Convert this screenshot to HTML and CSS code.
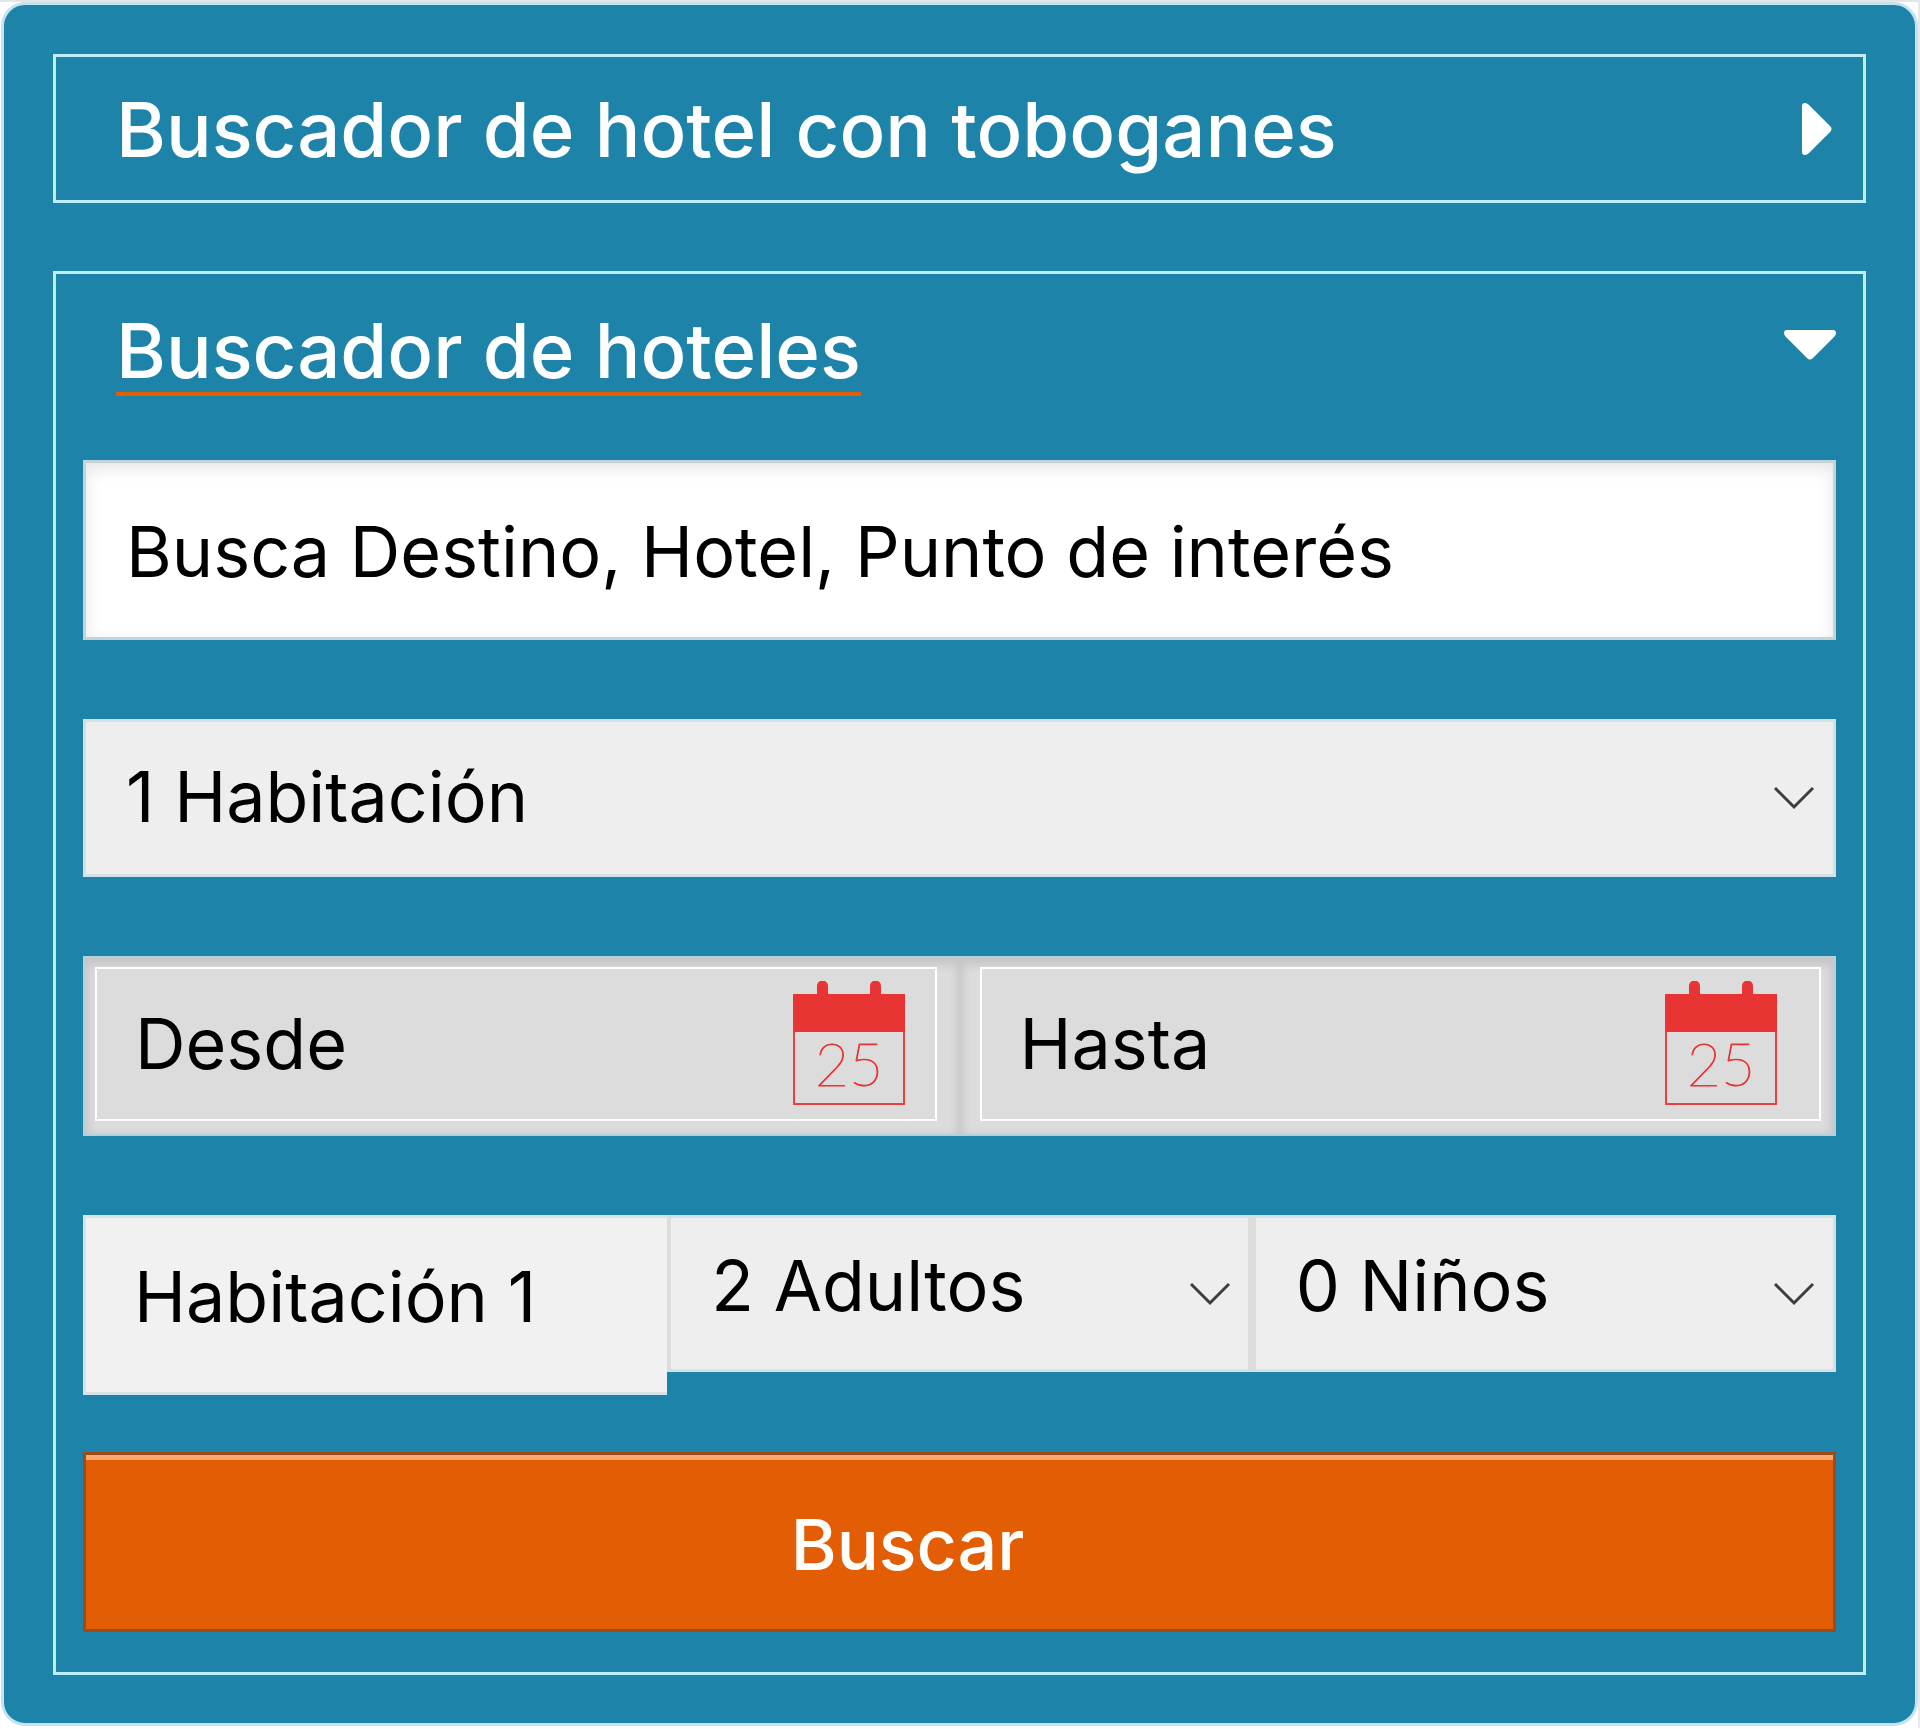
FILE: index.html
```html
<!DOCTYPE html>
<html lang="es">
<head>
<meta charset="utf-8">
<meta name="viewport" content="width=device-width, initial-scale=1">
<title>Buscador de hoteles</title>
<link rel="stylesheet" href="styles.css">
</head>
<body>
<main class="panel">
  <section class="box">
    <h2 class="heading">
      <button class="toggle" type="button" aria-expanded="false">
        <span class="toggle-text">Buscador de hotel con toboganes</span>
        <svg class="arrow arrow-right" viewBox="0 0 30 52" width="30" height="52" aria-hidden="true"><path d="M0 3Q0 0 3 0Q5 0 7 2L28 23Q31 26 28 29L7 50Q5 52 3 52Q0 52 0 49Z"/></svg>
      </button>
    </h2>
  </section>

  <section class="box">
    <h2 class="heading">
      <button class="toggle toggle-open" type="button" aria-expanded="true">
        <span class="toggle-text">Buscador de hoteles</span>
        <svg class="arrow" viewBox="0 0 52 30" width="52" height="30" aria-hidden="true"><path d="M3 0Q0 0 0 3Q0 5 2 7L23 28Q26 31 29 28L50 7Q52 5 52 3Q52 0 49 0Z"/></svg>
      </button>
    </h2>

    <form class="form">
      <input class="destination" type="text" aria-label="Destino" placeholder="Busca Destino, Hotel, Punto de interés">

      <div class="select rooms">
        <select class="select-field" aria-label="Habitaciones"><option>1 Habitación</option><option>2 Habitaciones</option></select>
        <svg class="chevron" viewBox="0 0 40 24" width="40" height="24" aria-hidden="true"><path d="M1 2L20 21L39 2"/></svg>
      </div>

      <div class="dates">
        <div class="date">
          <div class="date-frame">
            <input class="date-field" type="text" aria-label="Fecha desde" placeholder="Desde">
            <svg class="calendar" viewBox="0 0 112 124" width="112" height="124" aria-hidden="true"><path class="fill" d="M0 13H24V5a5 5 0 0 1 11 0V13H77V5a5 5 0 0 1 11 0V13H112V51H0Z"/><path class="line" d="M1 50V123H111V50"/><text x="56" y="105">25</text></svg>
          </div>
        </div>
        <div class="date">
          <div class="date-frame">
            <input class="date-field" type="text" aria-label="Fecha hasta" placeholder="Hasta">
            <svg class="calendar" viewBox="0 0 112 124" width="112" height="124" aria-hidden="true"><path class="fill" d="M0 13H24V5a5 5 0 0 1 11 0V13H77V5a5 5 0 0 1 11 0V13H112V51H0Z"/><path class="line" d="M1 50V123H111V50"/><text x="56" y="105">25</text></svg>
          </div>
        </div>
      </div>

      <div class="guests">
        <div class="room-name">Habitación 1</div>
        <div class="select">
          <select class="select-field guest-field" aria-label="Adultos"><option>2 Adultos</option><option>1 Adulto</option></select>
          <svg class="chevron" viewBox="0 0 40 24" width="40" height="24" aria-hidden="true"><path d="M1 2L20 21L39 2"/></svg>
        </div>
        <div class="select last">
          <select class="select-field guest-field" aria-label="Niños"><option>0 Niños</option><option>1 Niño</option></select>
          <svg class="chevron" viewBox="0 0 40 24" width="40" height="24" aria-hidden="true"><path d="M1 2L20 21L39 2"/></svg>
        </div>
      </div>

      <button class="submit" type="submit">Buscar</button>
    </form>
  </section>
</main>
</body>
</html>
```
FILE: styles.css
```css
* {
  box-sizing: border-box;
}

body {
  margin: 0;
  background: #fff;
  border-top: 2px solid #e2e6e6;
  border-right: 2px solid #e6e8ea;
  font-family: Inter, "Liberation Sans", sans-serif;
  font-size: 70px;
  color: #000;
}

input,
select,
button {
  margin: 0;
  font: inherit;
  color: inherit;
  border-radius: 0;
}

input::placeholder {
  color: #000;
  opacity: 1;
}

.panel {
  display: flex;
  flex-direction: column;
  gap: 68px;
  margin: 0 0 2px 1px;
  padding: 49px 49px 48px 49px;
  background: #1d83a8;
  border: 3px solid #c3e3ee;
  border-radius: 24px;
}

.box {
  border: 3px solid #bdeefb;
}

.heading {
  margin: 0;
  font-size: 76px;
  font-weight: 500;
}

.toggle {
  display: flex;
  align-items: center;
  justify-content: space-between;
  width: 100%;
  padding: 32px 27px 31px 60px;
  background: none;
  border: 0;
  color: #fff;
  line-height: 80px;
  text-align: left;
}

.toggle-open {
  align-items: flex-start;
  padding: 36px 27px 64px 60px;
}

.toggle-open .toggle-text {
  padding-bottom: 2px;
  border-bottom: 4px solid #e25d03;
}

.toggle-open .arrow {
  margin-top: 20px;
}

.arrow {
  fill: #fff;
}

.arrow-right {
  margin-right: 4px;
}

.form {
  display: flex;
  flex-direction: column;
  gap: 79px;
  padding: 0 27px 40px;
}

.destination {
  width: 100%;
  height: 180px;
  padding: 2px 40px 0;
  background: #fff;
  border: 3px solid #c3d3da;
  box-shadow: inset 0 6px 16px rgba(0, 0, 0, 0.1);
}

.select {
  display: grid;
  align-items: center;
}

.select > * {
  grid-area: 1 / 1;
}

.select-field {
  appearance: none;
  width: 100%;
  height: 158px;
  padding: 0 40px 4px;
  background: #eee;
  border: 3px solid #d2e1e7;
}

.chevron {
  justify-self: end;
  margin-right: 22px;
  fill: none;
  stroke: #3c3c3c;
  stroke-width: 3;
  pointer-events: none;
}

.dates {
  display: grid;
  grid-template-columns: repeat(2, minmax(0, 1fr));
  border: 2px solid #b4d0dc;
}

.date {
  padding: 9px 13px 13px 20px;
  background: #dcdcdc;
  box-shadow: inset 0 4px 10px 3px rgba(0, 0, 0, 0.1);
}

.date:first-child {
  padding: 9px 23px 13px 10px;
}

.date-frame {
  display: flex;
  align-items: center;
  height: 154px;
  padding: 0 30px 2px 38px;
  background: #dcdcdc;
  border: 2px solid #fff;
}

.date:last-child .date-frame {
  padding-right: 42px;
}

.date-field {
  flex: 1;
  min-width: 0;
  height: 120px;
  padding: 0;
  background: none;
  border: 0;
}

.calendar {
  flex: none;
}

.calendar .fill {
  fill: #e93434;
}

.calendar .line {
  fill: none;
  stroke: #ec4040;
  stroke-width: 2;
}

.calendar text {
  fill: #e93434;
  stroke: #e93434;
  stroke-width: 1;
  font-family: Lato, sans-serif;
  font-size: 59px;
  font-weight: 100;
  text-anchor: middle;
}

.guests {
  display: grid;
  grid-template-columns: repeat(3, minmax(0, 1fr));
  align-items: start;
  margin-bottom: -22px;
}

.room-name {
  height: 180px;
  padding: 0 48px 16px;
  background: #f1f1f1;
  border: 3px solid #d6e4ea;
  border-right: 0;
  line-height: 158px;
  white-space: nowrap;
}

.guest-field {
  height: 157px;
  padding: 0 40px 16px;
  border-right: 4px solid #dcdcdc;
  border-left: 4px solid #dcdcdc;
}

.last .guest-field {
  border-right: 3px solid #d2e1e7;
}

.submit {
  height: 180px;
  padding: 4px 104px 0 0;
  background: #e25d03;
  border: 3px solid #9c4c1c;
  box-shadow: inset 0 5px 0 #fba770;
  color: #fff;
  font-weight: 500;
}
```
